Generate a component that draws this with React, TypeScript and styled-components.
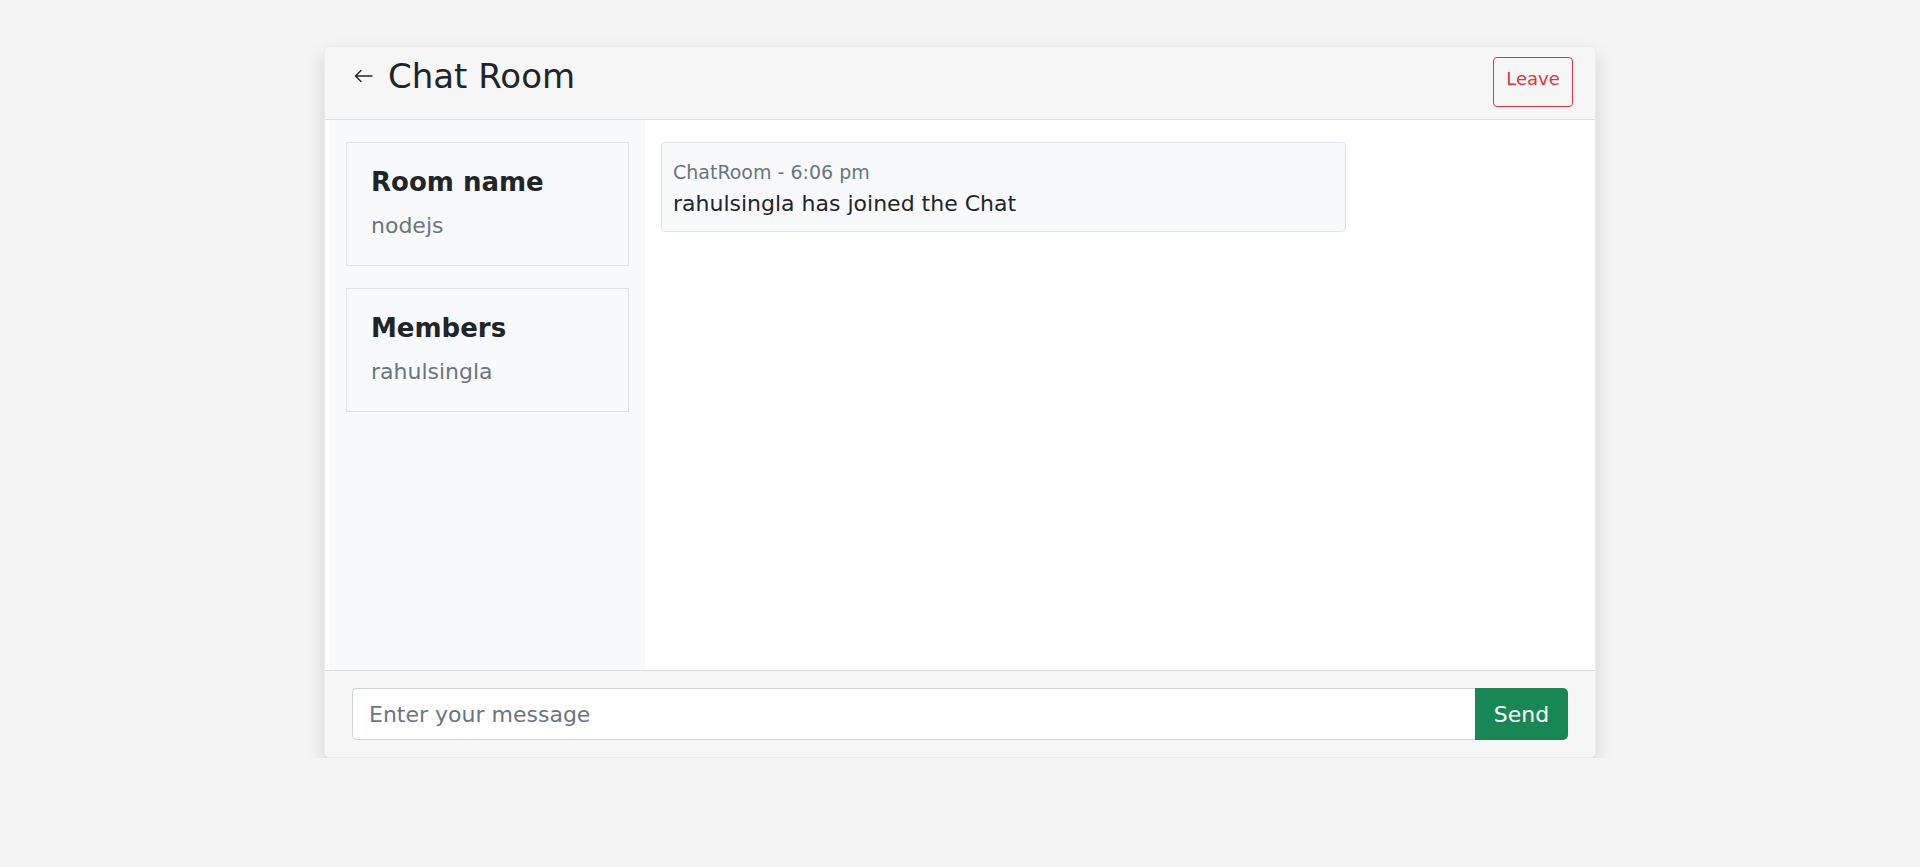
import styled, { createGlobalStyle } from 'styled-components';

const GlobalStyle = createGlobalStyle`
  * {
    box-sizing: border-box;
  }

  body {
    margin: 0;
    background-color: #f4f4f4;
    font-family: 'DejaVu Sans', 'Noto Sans', sans-serif;
    color: #212529;
  }
`;

const Page = styled.div`
  display: flex;
  justify-content: center;
  padding-top: 46px;
`;

const Card = styled.div`
  width: 1272px;
  height: 712px;

  display: flex;
  flex-direction: column;

  background-color: #fff;
  border: 1px solid rgba(0, 0, 0, 0.08);
  border-radius: 6px;
  box-shadow: 0 8px 18px rgba(0, 0, 0, 0.15);
  overflow: hidden;
`;

const Header = styled.div`
  height: 73px;
  flex-shrink: 0;

  display: flex;
  align-items: flex-start;
  justify-content: space-between;

  padding: 10px 22px 0 29px;

  background-color: #f6f6f6;
  border-bottom: 1px solid #dcdcdc;
`;

const TitleGroup = styled.div`
  display: flex;
  align-items: center;
  gap: 15px;
  height: 38px;
`;

const BackButton = styled.button`
  display: flex;
  align-items: center;
  padding: 0;
  border: none;
  background: none;
  color: #212529;
  cursor: pointer;
`;

const Title = styled.h2`
  margin: 0;
  font-size: 34px;
  line-height: 38px;
  font-weight: 400;
`;

const LeaveButton = styled.button`
  width: 80px;
  height: 50px;

  display: flex;
  align-items: flex-start;
  justify-content: center;
  padding: 9px 0 0;

  font-family: inherit;
  font-size: 18px;
  line-height: 24px;
  color: #dc3545;

  background: transparent;
  border: 1px solid #dc3545;
  border-radius: 4px;
`;

const Body = styled.div`
  flex: 1;
  display: flex;
  padding-left: 5px;
  min-height: 0;
`;

const Sidebar = styled.div`
  width: 315px;

  display: flex;
  flex-direction: column;
  gap: 22px;

  padding: 22px 16px 0 16px;

  background-color: #f8f9fa;
`;

const InfoBox = styled.div`
  height: 124px;
  padding: 24px 24px 0;

  border: 1px solid #dee2e6;
`;

const InfoTitle = styled.h3`
  margin: 0 0 13px;
  font-size: 26px;
  line-height: 31px;
  font-weight: 700;
  color: #212529;
`;

const InfoText = styled.p`
  margin: 0;
  font-size: 22px;
  line-height: 30px;
  color: #6c757d;
`;

const Messages = styled.div`
  flex: 1;
  padding: 22px 16px;
`;

const Message = styled.div`
  width: 685px;
  height: 90px;
  padding: 17px 11px 0;

  background-color: #f8f9fa;
  border: 1px solid #dee2e6;
  border-radius: 4px;
`;

const MessageMeta = styled.p`
  margin: 0 0 6px;
  font-size: 19px;
  line-height: 24px;
  color: #6c757d;
`;

const MessageText = styled.p`
  margin: 0;
  font-size: 22px;
  line-height: 28px;
  color: #212529;
`;

const Footer = styled.div`
  height: 87px;
  flex-shrink: 0;

  display: flex;
  padding: 17px 27px;

  background-color: #f6f6f6;
  border-top: 1px solid #d9dbde;
`;

const Input = styled.input`
  flex: 1;
  height: 52px;
  padding: 0 16px;

  font-family: inherit;
  font-size: 22px;
  color: #212529;

  background-color: #fff;
  border: 1px solid #ced4da;
  border-right: none;
  border-radius: 5px 0 0 5px;
  outline: none;

  &::placeholder {
    color: #6c757d;
  }
`;

const SendButton = styled.button`
  width: 93px;
  height: 52px;

  font-family: inherit;
  font-size: 22px;
  color: #fff;

  background-color: #198754;
  border: none;
  border-radius: 0 5px 5px 0;
`;

function ArrowLeft() {
  return (
    <svg width="19" height="14" viewBox="0 0 19 14" fill="none">
      <path
        d="M18 7H1.5M7 1.5L1.5 7L7 12.5"
        stroke="currentColor"
        strokeWidth="1.4"
        strokeLinecap="round"
        strokeLinejoin="round"
      />
    </svg>
  );
}

export default function App() {
  return (
    <>
      <GlobalStyle />
      <Page>
        <Card>
          <Header>
            <TitleGroup>
              <BackButton>
                <ArrowLeft />
              </BackButton>
              <Title>Chat Room</Title>
            </TitleGroup>
            <LeaveButton>Leave</LeaveButton>
          </Header>
          <Body>
            <Sidebar>
              <InfoBox>
                <InfoTitle>Room name</InfoTitle>
                <InfoText>nodejs</InfoText>
              </InfoBox>
              <InfoBox>
                <InfoTitle>Members</InfoTitle>
                <InfoText>rahulsingla</InfoText>
              </InfoBox>
            </Sidebar>
            <Messages>
              <Message>
                <MessageMeta>ChatRoom - 6:06 pm</MessageMeta>
                <MessageText>rahulsingla has joined the Chat</MessageText>
              </Message>
            </Messages>
          </Body>
          <Footer>
            <Input placeholder="Enter your message" />
            <SendButton>Send</SendButton>
          </Footer>
        </Card>
      </Page>
    </>
  );
}
